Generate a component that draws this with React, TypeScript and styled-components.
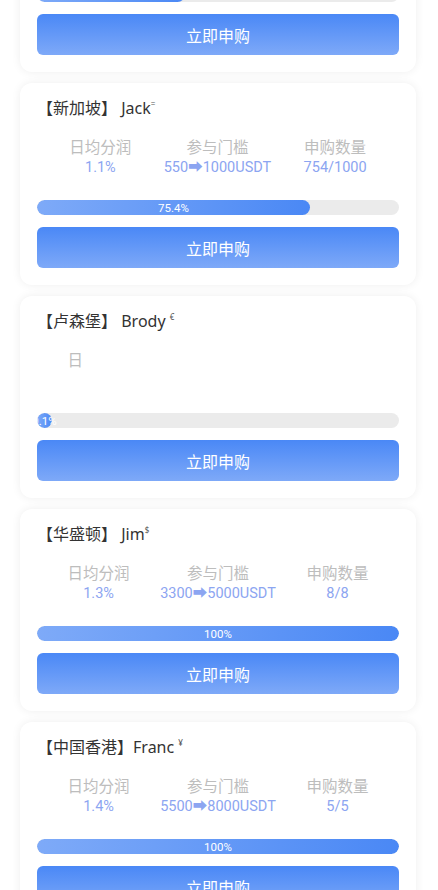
import React from "react";
import styled, { createGlobalStyle } from "styled-components";

const GlobalStyle = createGlobalStyle`
  html, body {
    margin: 0;
    padding: 0;
    background: #fff;
    font-family: "Noto Sans", "Noto Sans CJK SC", sans-serif;
    overflow: hidden;
  }
`;

interface Plan {
  city: string;
  name: string;
  sym: string;
  rate: string;
  range: string;
  count: string;
  pct: number;
  loading?: boolean;
}

const plans: Plan[] = [
  { city: "东京", name: " Tom", sym: "¥", rate: "1.0%", range: "300➡500USDT", count: "41/100", pct: 41 },
  { city: "新加坡", name: " Jack", sym: "=", rate: "1.1%", range: "550➡1000USDT", count: "754/1000", pct: 75.4 },
  { city: "卢森堡", name: " Brody ", sym: "€", rate: "1.2%", range: "1100➡3000USDT", count: "1/1000", pct: 0.1, loading: true },
  { city: "华盛顿", name: " Jim", sym: "$", rate: "1.3%", range: "3300➡5000USDT", count: "8/8", pct: 100 },
  { city: "中国香港", name: "Franc ", sym: "¥", rate: "1.4%", range: "5500➡8000USDT", count: "5/5", pct: 100 },
];

// list is scrolled so the first card is partly above the viewport
const List = styled.div`
  display: flex;
  flex-direction: column;
  gap: 11px;
  margin-top: -130px;
  padding: 0 22px 20px 20px;
`;

const Card = styled.div`
  background: #fff;
  border-radius: 12px;
  box-shadow: 0 0 10px rgba(0, 0, 0, 0.07);
  padding: 14px 17px 17px;
`;

const Title = styled.div`
  height: 22px;
  font-size: 16px;
  line-height: 22px;
  color: #333;
  margin-bottom: 17px;
  white-space: pre;

  sup {
    font-size: 8px;
    line-height: 0;
    color: #555;
    vertical-align: 7px;
  }
`;

const Stats = styled.div`
  display: flex;
  justify-content: space-evenly;
  margin-bottom: 22px;
`;

const Stat = styled.div`
  text-align: center;
`;

const Label = styled.div`
  height: 20px;
  font-family: "Noto Sans CJK SC", sans-serif;
  font-size: 15.5px;
  line-height: 20px;
  color: #bdbdbd;

  span {
    color: transparent;
  }
`;

const Value = styled.div<{ $hidden?: boolean }>`
  height: 20px;
  margin-top: 2px;
  font-family: Roboto, "Noto Sans CJK SC", sans-serif;
  font-size: 14.5px;
  line-height: 20px;
  color: ${(p) => (p.$hidden ? "transparent" : "#8ca5f1")};
  white-space: nowrap;
`;

const Bar = styled.div`
  height: 15px;
  border-radius: 8px;
  background: #ebebeb;
  overflow: hidden;
  display: flex;
`;

const Fill = styled.div`
  min-width: 15px;
  height: 100%;
  border-radius: 8px;
  background: linear-gradient(90deg, #7eaaf8 0%, #4a88f5 100%);
  display: flex;
  align-items: center;
  justify-content: center;
  overflow: visible;
  white-space: nowrap;
  font-family: Roboto, sans-serif;
  font-size: 11.5px;
  color: #fff;
`;

const BuyButton = styled.button`
  display: block;
  width: 100%;
  height: 41px;
  margin-top: 12px;
  border: none;
  border-radius: 6px;
  background: linear-gradient(180deg, #4a88f6 0%, #7ea9f8 100%);
  color: #fff;
  font-family: "Noto Sans CJK SC", sans-serif;
  font-size: 16px;
`;

const PlanCard: React.FC<{ plan: Plan }> = ({ plan }) => (
  <Card>
    <Title>
      【{plan.city}】{plan.name}
      <sup>{plan.sym}</sup>
    </Title>
    <Stats>
      <Stat>
        <Label>
          日{plan.loading ? <span>均分润</span> : "均分润"}
        </Label>
        <Value $hidden={plan.loading}>{plan.rate}</Value>
      </Stat>
      <Stat>
        <Label>{plan.loading ? <span>参与门槛</span> : "参与门槛"}</Label>
        <Value $hidden={plan.loading}>{plan.range}</Value>
      </Stat>
      <Stat>
        <Label>{plan.loading ? <span>申购数量</span> : "申购数量"}</Label>
        <Value $hidden={plan.loading}>{plan.count}</Value>
      </Stat>
    </Stats>
    <Bar>
      <Fill style={{ width: `${plan.pct}%` }}>{plan.pct}%</Fill>
    </Bar>
    <BuyButton>立即申购</BuyButton>
  </Card>
);

const App: React.FC = () => (
  <>
    <GlobalStyle />
    <List>
      {plans.map((p) => (
        <PlanCard key={p.city} plan={p} />
      ))}
    </List>
  </>
);

export default App;
